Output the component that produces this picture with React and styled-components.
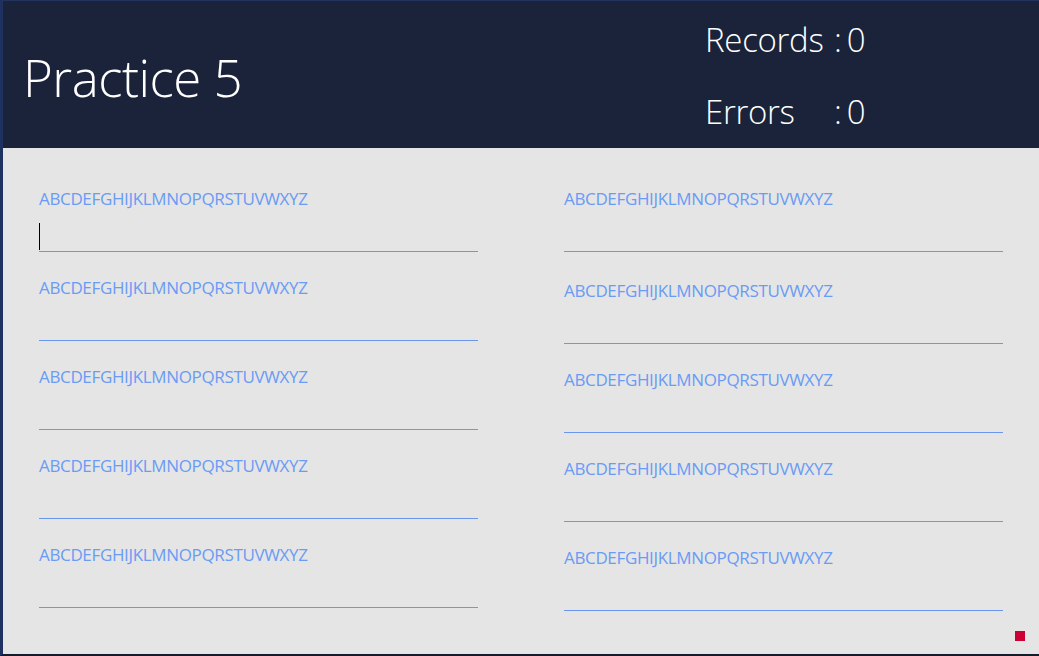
import React from "react";
import styled, { createGlobalStyle } from "styled-components";

const GlobalStyle = createGlobalStyle`
  html, body {
    margin: 0;
    padding: 0;
    background: #1c2a4e;
  }
  body {
    font-family: "Open Sans", "Liberation Sans", sans-serif;
  }
`;

const Ventana = styled.div`
  width: 1039px;
  height: 656px;
  box-sizing: border-box;
  border-left: 3px solid #1f3160;
  border-top: 1px solid #22335f;
  border-bottom: 2px solid #141b2c;
  display: flex;
  flex-direction: column;
  background: #e5e5e5;
`;

const Cabecera = styled.header`
  height: 147px;
  background: #1a2339;
  display: flex;
  justify-content: space-between;
  padding-left: 20px;
`;

const Titulo = styled.h1`
  margin: 0;
  align-self: center;
  font-weight: 300;
  font-size: 51px;
  color: #ffffff;
  letter-spacing: -0.5px;
  margin-top: 4px;
`;

const Marcadores = styled.div`
  width: 334px;
  display: flex;
  flex-direction: column;
  padding-top: 14px;
  gap: 22px;
`;

const Marcador = styled.div`
  display: grid;
  grid-template-columns: 129px auto;
  font-weight: 300;
  font-size: 33px;
  line-height: 50px;
  color: #ffffff;
  letter-spacing: -0.3px;
`;

const Cuerpo = styled.main`
  flex: 1;
  display: grid;
  grid-template-columns: 439px 439px;
  column-gap: 86px;
  padding: 41px 36px 0 36px;
  position: relative;
`;

const Columna = styled.div`
  display: flex;
  flex-direction: column;
  gap: 26px;
`;

const Fila = styled.div`
  display: flex;
  flex-direction: column;
  margin-top: ${(p) => p.$desfase || 0}px;
`;

const Etiqueta = styled.div`
  font-size: 17px;
  line-height: 20px;
  color: #6a9bf5;
  letter-spacing: -0.35px;
`;

const Campo = styled.div`
  height: 41px;
  border-bottom: 1px solid ${(p) => (p.$activo ? "#6a95ec" : "#8b93a8")};
  display: flex;
  align-items: flex-end;
  padding-bottom: 1px;
`;

const Cursor = styled.span`
  width: 1px;
  height: 27px;
  background: #000000;
`;

const Indicador = styled.div`
  position: absolute;
  right: 14px;
  bottom: 13px;
  width: 10px;
  height: 10px;
  background: #cc0033;
`;

const texto = "ABCDEFGHIJKLMNOPQRSTUVWXYZ";

const izquierda = [
  { activo: true, cursor: true },
  { activo: true },
  { activo: false },
  { activo: true },
  { activo: false },
];

const derecha = [
  { activo: false },
  { activo: false, desfase: 3 },
  { activo: true },
  { activo: false },
  { activo: true },
];

const App = () => {
  return (
    <>
      <GlobalStyle />
      <Ventana>
        <Cabecera>
          <Titulo>Practice 5</Titulo>
          <Marcadores>
            <Marcador>
              <span>Records</span>
              <span>:{"\u2009"}0</span>
            </Marcador>
            <Marcador>
              <span>Errors</span>
              <span>:{"\u2009"}0</span>
            </Marcador>
          </Marcadores>
        </Cabecera>
        <Cuerpo>
          <Columna>
            {izquierda.map((f, i) => (
              <Fila key={i} $desfase={f.desfase}>
                <Etiqueta>{texto}</Etiqueta>
                <Campo $activo={f.activo}>{f.cursor && <Cursor />}</Campo>
              </Fila>
            ))}
          </Columna>
          <Columna>
            {derecha.map((f, i) => (
              <Fila key={i} $desfase={f.desfase}>
                <Etiqueta>{texto}</Etiqueta>
                <Campo $activo={f.activo} />
              </Fila>
            ))}
          </Columna>
          <Indicador />
        </Cuerpo>
      </Ventana>
    </>
  );
};

export default App;
